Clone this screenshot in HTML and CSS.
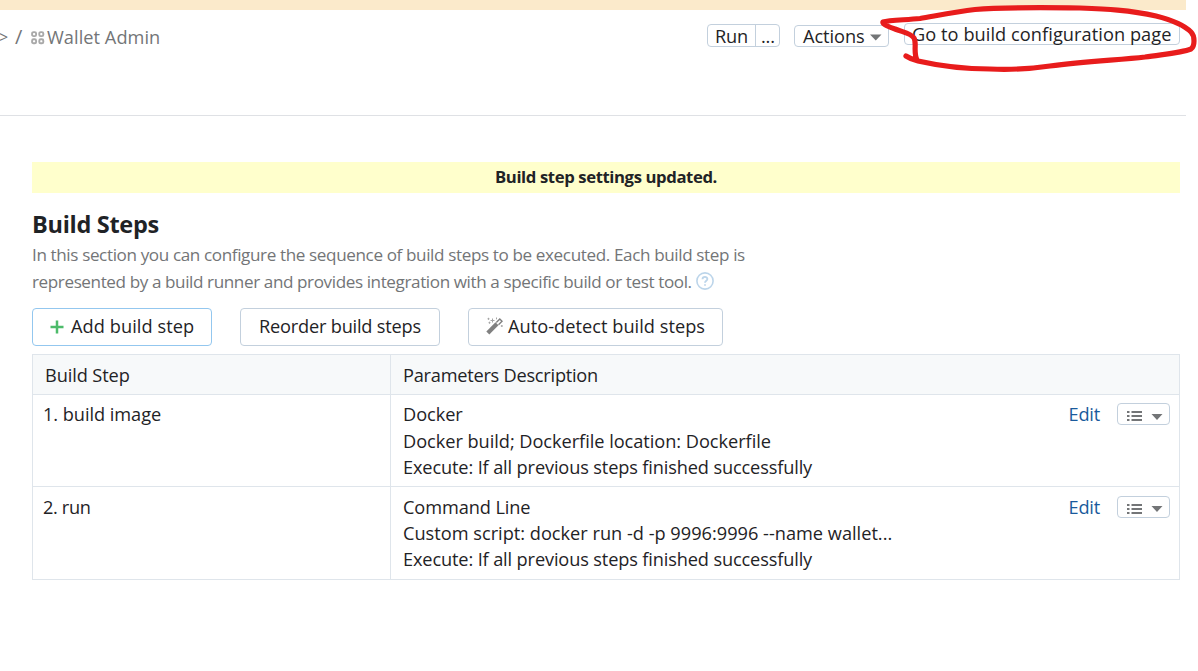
FILE: index.html
```html
<!DOCTYPE html>
<html lang="en">
<head>
<meta charset="utf-8">
<title>Build Steps</title>
<link rel="stylesheet" href="styles.css">
</head>
<body>
<div class="notice-strip"></div>
<header class="header">
  <nav class="crumbs">
    <span class="crumb-end">&gt;</span><span class="slash">/</span>
    <svg class="grid-icon" width="14" height="14" viewBox="0 0 14 14" fill="none" stroke="#a9a9a9" stroke-width="1.9"><rect x="1.1" y="1.1" width="4" height="4" rx="1.4"/><rect x="8.3" y="1.1" width="4" height="4" rx="1.4"/><rect x="1.1" y="8.3" width="4" height="4" rx="1.4"/><rect x="8.3" y="8.3" width="4" height="4" rx="1.4"/></svg>
    <span class="crumb-name">Wallet Admin</span>
  </nav>
  <div class="actions">
    <div class="run-group"><span class="run">Run</span><span class="dots">...</span></div>
    <div class="menu-btn"><span class="actions-label">Actions</span><svg class="caret" width="12" height="7" viewBox="0 0 12 7"><path d="M0 .5h11.500L5.750 6.500z" fill="#737577"/></svg></div>
    <div class="goto"><span class="goto-label">Go to build configuration page</span></div>
  </div>
</header>
<svg class="marker" width="330" height="80" viewBox="868 0 330 80" fill="none" stroke="#e81c1c" stroke-linecap="round" stroke-linejoin="round"><path stroke-width="5.200" d="M906 56C909 58 914 60 918 61C940 66 965 69 990 69C1015 70 1030 69 1050 66C1085 61 1120 60 1145 57C1165 54 1181 53 1191 49C1195 46 1195 36 1191 32C1184 25 1168 19 1156 16C1130 10 1105 9 1080 8C1045 7.500 1005 7 975 9.500C955 12 935 16 920 18.500C905 20 889 20 883 22C882 24 889 27 895 29C902 32 911 33 914 38C917 43 913 52 917 60"/></svg>
<main class="content">
  <div class="alert"><span class="alert-text">Build step settings updated.</span></div>
  <h1 class="title">Build Steps</h1>
  <p class="desc"><span class="desc-a">In this section you can configure the sequence of build steps to be executed. Each build step is</span><br><span class="desc-b">represented by a build runner and provides integration with a specific build or test tool.</span>
  <svg class="help" width="18" height="18" viewBox="0 0 18 18" fill="none" stroke="#bcd5ea" stroke-width="1.600"><circle cx="9" cy="9" r="8.100"/><path stroke-width="1.800" d="M6.500 7.300C6.500 4.200 11.400 4.200 11.400 7.100C11.400 8.900 9 8.700 9 10.800M9 12.300v1.500"/></svg></p>
  <div class="toolbar">
    <div class="btn btn-add"><svg width="14" height="14" viewBox="0 0 14 14"><path d="M7 .5v13M.5 7h13" stroke="#4dbb6a" stroke-width="2.500"/></svg><span class="add-label">Add build step</span></div>
    <div class="btn btn-reorder"><span class="reorder-label">Reorder build steps</span></div>
    <div class="btn btn-auto"><svg class="wand" width="18" height="18" viewBox="0 0 18 18"><path d="M1.800 16L11 6.700" stroke="#808080" stroke-width="4.200"/><path d="M10.300 5.600L13.800 2.100l2.200 2.200L12.500 7.800" fill="none" stroke="#808080" stroke-width="1.400"/><path d="M6.500 1.500v4M4.500 3.500h4M2.500 .8v2M1.500 1.800h2M3.500 4.700v2M2.500 5.700h2M10.500 .5v1.800M15.800 8v2M14.800 9h2" stroke="#a5a5a5" stroke-width="1"/></svg><span class="auto-label">Auto-detect build steps</span></div>
  </div>
  <div class="table">
    <div class="row head"><div class="cell-step"><span class="th-a">Build Step</span></div><div class="cell-desc"><span class="th-b">Parameters Description</span></div></div>
    <div class="row first">
      <div class="cell-step"><span class="s1">1. build image</span></div>
      <div class="cell-desc"><div class="lines"><span class="l1">Docker</span><span class="l2">Docker build; Dockerfile location: Dockerfile</span><span class="l3">Execute: If all previous steps finished successfully</span></div>
        <div class="row-actions"><span class="edit">Edit</span><span class="list-btn"><svg width="36" height="14" viewBox="0 0 36 14" fill="#737577"><path d="M0 1h2.500v2H0zM4.500 1H15v2H4.500zM0 5h2.500v2H0zM4.500 5H15v2H4.500zM0 9h2.500v2H0zM4.500 9H15v2H4.500zM24.500 4h11L30 10z"/></svg></span></div></div>
    </div>
    <div class="row second">
      <div class="cell-step"><span class="s2">2. run</span></div>
      <div class="cell-desc"><div class="lines"><span class="l4">Command Line</span><span class="l5">Custom script: docker run -d -p 9996:9996 --name wallet...</span><span class="l3">Execute: If all previous steps finished successfully</span></div>
        <div class="row-actions"><span class="edit">Edit</span><span class="list-btn"><svg width="36" height="14" viewBox="0 0 36 14" fill="#737577"><path d="M0 1h2.500v2H0zM4.500 1H15v2H4.500zM0 5h2.500v2H0zM4.500 5H15v2H4.500zM0 9h2.500v2H0zM4.500 9H15v2H4.500zM24.500 3h11L30 9z"/></svg></span></div></div>
    </div>
  </div>
</main>
</body>
</html>
```
FILE: styles.css
```css
* { box-sizing: border-box; }
body { margin: 0; width: 1198px; height: 671px; overflow: hidden; background: #fff; color: #1f2326; font-family: "Open Sans", "Noto Sans", sans-serif; font-size: 18.2px; letter-spacing: -0.2px; line-height: 26.5px; white-space: nowrap; }
svg { flex: none; }
.notice-strip { width: 1186px; height: 10px; background: #fbeacb; }
.header { width: 1186px; height: 106px; border-bottom: 1px solid #dfe1e5; display: flex; justify-content: space-between; padding: 13px 6px 0 0; }
.crumbs { display: flex; height: 28px; align-items: center; color: #737577; }
.crumb-end { width: 8px; font-size: 16px; display: flex; justify-content: flex-end; overflow: hidden; }
.slash { margin: 0 0 0 7px; width: 15px; font-size: 20px; }
.crumb-name { letter-spacing: 0.05px; }
.grid-icon { margin: 2px 2px 0 1px; }
.actions { display: flex; align-items: flex-start; }
.run-group, .menu-btn, .goto { border: 1px solid #c3d0dd; border-radius: 4px; height: 23px; display: flex; align-items: center; line-height: 21px; }
.run-group { margin-top: 1px; width: 73px; }
.run { width: 48px; height: 21px; line-height: 22px; padding-left: 7px; border-right: 1px solid #c3d0dd; }
.dots { padding-left: 5px; line-height: 22px; }
.menu-btn { width: 95px; height: 22px; margin: 2px 0 0 14px; padding-left: 8px; }
.actions-label { width: 67px; letter-spacing: -0.05px; }
.caret { margin-top: 3px; }
.goto { width: 276px; height: 22px; margin-left: 15px; padding-left: 7px; letter-spacing: 0.06px; }
.marker { position: absolute; left: 868px; top: 0; }
.content { width: 1148px; margin: 46px 0 0 32px; }
.alert { height: 31px; background: #ffffcc; text-align: center; font-weight: 700; font-size: 16.7px; line-height: 29px; letter-spacing: -0.39px; }
.title { margin: 15px 0 0; font-size: 23.5px; font-weight: 700; line-height: 32px; height: 33px; letter-spacing: -0.3px; }
.desc { margin: 0; font-size: 17.1px; line-height: 27px; height: 54px; color: #737577; letter-spacing: -0.38px; }
.desc-b { letter-spacing: -0.4px; }
.help { vertical-align: -2px; }
.toolbar { display: flex; gap: 28px; margin-top: 13px; }
.btn { height: 38px; border: 1px solid #c3d0dd; border-radius: 4px; display: flex; align-items: center; padding: 0 0 2px 17px; }
.btn > svg { margin-top: 2px; }
.btn > .wand { margin-top: 0; }
.btn-add { width: 180px; border-color: #93c7ef; gap: 7px; letter-spacing: 0.07px; }
.btn-reorder { width: 200px; padding-left: 18px; }
.btn-auto { width: 255px; gap: 4px; letter-spacing: 0.03px; }
.table { margin-top: 8px; border: 1px solid #dfe5eb; }
.row { display: flex; height: 93px; border-top: 1px solid #dfe5eb; }
.row.first { height: 92px; }
.row.head { height: 39px; border-top: 0; background: #f7f9fa; }
.cell-step { width: 358px; border-right: 1px solid #dfe5eb; padding: 6px 0 0 10px; }
.cell-desc { flex: 1; display: flex; justify-content: space-between; padding: 6px 9px 0 12px; }
.head .cell-step { padding: 7px 0 0 12px; }
.head .cell-desc { padding-top: 7px; }
.second .cell-step, .second .cell-desc { padding-top: 7px; line-height: 26px; }
.th-a { letter-spacing: -0.1px; }
.th-b { letter-spacing: -0.24px; }
.s1 { letter-spacing: -0.05px; }
.s2 { letter-spacing: -0.35px; }
.lines { display: flex; flex-direction: column; }
.l1 { letter-spacing: -0.05px; }
.l2 { letter-spacing: -0.04px; }
.l3 { letter-spacing: -0.14px; }
.l4 { letter-spacing: -0.1px; }
.l5 { letter-spacing: 0; }
.edit { color: #1a5a9c; }
.row-actions { display: flex; align-items: flex-start; gap: 17px; }
.list-btn { width: 53px; height: 22px; margin-top: 2px; border: 1px solid #c3d0dd; border-radius: 4px; padding: 6px 0 0 9px; display: flex; }
```
